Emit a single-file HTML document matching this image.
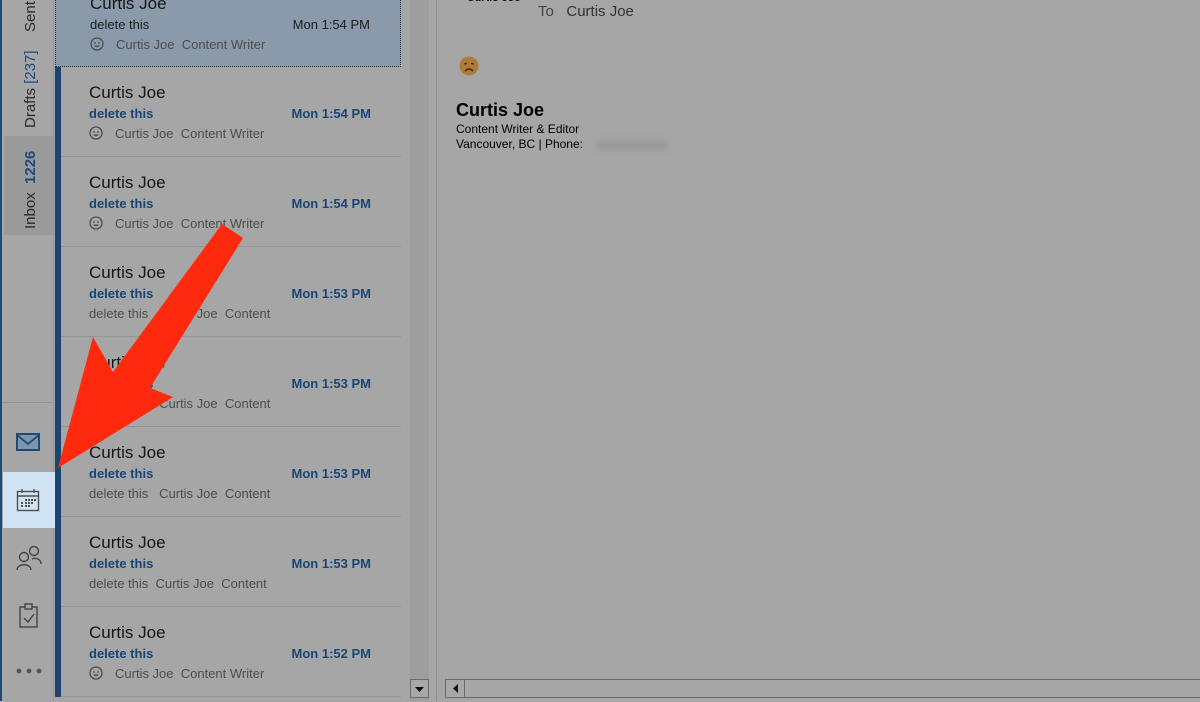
<!DOCTYPE html>
<html><head><meta charset="utf-8">
<style>
*{margin:0;padding:0;box-sizing:border-box}
body{width:1200px;height:701px;overflow:hidden;background:#a6a6a6;font-family:"Segoe UI","Liberation Sans","DejaVu Sans",sans-serif;position:relative}
.side{position:absolute;left:0;top:0;width:54px;height:701px;border-left:2px solid #1f4a78;border-right:1px solid #979797;background:#a6a6a6}
.vt{position:absolute;transform:rotate(-90deg);transform-origin:left top;white-space:nowrap;font-size:15px;color:#2a2a2a}
.vt b{color:#1c4a7a;font-weight:600}
.inboxbg{position:absolute;left:2px;top:136px;width:51px;height:99px;background:#9a9a9a}
.calbg{position:absolute;left:1px;top:472px;width:52px;height:56px;background:#cfe3f3}
.ico{position:absolute}
.list{position:absolute;left:55px;top:0;width:347px;height:701px}
.item{position:absolute;left:0;width:346px;height:90px;border-bottom:1px solid #959595}
.item .bar{position:absolute;left:0;top:0;width:6px;height:90px;background:#1c4471}
.nm{position:absolute;left:34px;top:16px;font-size:17px;color:#151515}
.sb{position:absolute;left:34px;top:39px;font-size:13px;font-weight:bold;color:#1a4675}
.tm{position:absolute;right:30px;top:39px;font-size:13px;font-weight:bold;color:#1a4675}
.pv{position:absolute;left:34px;top:59px;font-size:13px;color:#4d4d4d;white-space:pre}
.emo{display:inline-block;vertical-align:-2px;margin-right:12px}
.sel{background:#8a9aab;border:1px dotted #333}
.sel .sb,.sel .tm{font-weight:normal;color:#1c1c1c}
.vscroll{position:absolute;left:410px;top:0;width:19px;height:701px;background:#9e9e9e}
.btn{position:absolute;border:1px solid #6a6a6a;background:#a8a8a8}
.sep{position:absolute;left:436px;top:0;width:1px;height:701px;background:#8e8e8e}
.rp{position:absolute;left:437px;top:0;right:0;height:701px}
</style></head><body>
<svg width="0" height="0" style="position:absolute"><defs><g id="sm"><circle cx="7" cy="7" r="6" fill="none" stroke="#4d4d4d" stroke-width="1.3"/><path d="M4 6 L6 6 M8 6 L10 6" stroke="#4d4d4d" stroke-width="1.2"/><path d="M4 8.5 Q7 12 10 8.5 Z" fill="#4d4d4d"/></g></defs></svg>
<div class="side">
 <div class="inboxbg"></div>
 <div class="vt" style="left:20px;top:229px">Inbox&nbsp;&nbsp;<b>1226</b></div>
 <div class="vt" style="left:20px;top:128px">Drafts <span style="color:#1c4a7a">[237]</span></div>
 <div class="vt" style="left:20px;top:32px">Sent</div>
 <div style="position:absolute;left:0;top:402px;width:52px;height:1px;background:#959595"></div>
 <div class="calbg"></div>
 <svg class="ico" style="left:14px;top:433px" width="26" height="20"><rect x="1" y="1" width="22" height="16" fill="#7d95ad" stroke="#1f4a78" stroke-width="2"/><path d="M1 2 L12 11 L23 2" fill="none" stroke="#1f4a78" stroke-width="1.8"/></svg>
 <svg class="ico" style="left:14px;top:488px" width="26" height="26"><rect x="1.5" y="3.5" width="21" height="19" fill="none" stroke="#505050" stroke-width="1.4"/><line x1="1.5" y1="8" x2="22.5" y2="8" stroke="#505050" stroke-width="1.4"/><line x1="6" y1="1" x2="6" y2="5" stroke="#505050" stroke-width="1.4"/><line x1="18" y1="1" x2="18" y2="5" stroke="#505050" stroke-width="1.4"/><g fill="#505050"><rect x="9" y="11" width="2" height="2"/><rect x="12" y="11" width="2" height="2"/><rect x="15" y="11" width="2" height="2"/><rect x="18" y="11" width="2" height="2"/><rect x="5" y="14" width="2" height="2"/><rect x="9" y="14" width="2" height="2"/><rect x="12" y="14" width="2" height="2"/><rect x="15" y="14" width="2" height="2"/><rect x="5" y="17" width="2" height="2"/><rect x="9" y="17" width="2" height="2"/><rect x="12" y="17" width="2" height="2"/></g></svg>
 <svg class="ico" style="left:13px;top:545px" width="28" height="26" fill="none" stroke="#444" stroke-width="1.4"><circle cx="9" cy="12" r="4.5"/><path d="M2 25 C2 18 16 18 16 25"/><circle cx="19" cy="6" r="4.5"/><path d="M17 14 C22 12 26 15 26 19"/></svg>
 <svg class="ico" style="left:17px;top:603px" width="20" height="26" fill="none" stroke="#444" stroke-width="1.4"><rect x="1" y="4" width="17" height="20"/><rect x="6" y="1" width="7" height="5" fill="#a6a6a6"/><path d="M5 15 L9 19 L15 11"/></svg>
 <svg class="ico" style="left:13px;top:666px" width="30" height="10" fill="#555"><circle cx="4" cy="5" r="2.4"/><circle cx="14" cy="5" r="2.4"/><circle cx="24" cy="5" r="2.4"/></svg>
</div>

<div class="list">
 <div class="item sel" style="top:-23px;height:90px">
  <div class="nm">Curtis Joe</div><div class="sb">delete this</div><div class="tm">Mon 1:54 PM</div>
  <div class="pv"><svg class="emo" width="14" height="14"><use href="#sm"/></svg>Curtis Joe  Content Writer</div>
 </div>
 <div class="item" style="top:67px"><div class="bar"></div><div class="nm">Curtis Joe</div><div class="sb">delete this</div><div class="tm">Mon 1:54 PM</div><div class="pv"><svg class="emo" width="14" height="14"><use href="#sm"/></svg>Curtis Joe  Content Writer</div></div>
 <div class="item" style="top:157px"><div class="bar"></div><div class="nm">Curtis Joe</div><div class="sb">delete this</div><div class="tm">Mon 1:54 PM</div><div class="pv"><svg class="emo" width="14" height="14"><use href="#sm"/></svg>Curtis Joe  Content Writer</div></div>
 <div class="item" style="top:247px"><div class="bar"></div><div class="nm">Curtis Joe</div><div class="sb">delete this</div><div class="tm">Mon 1:53 PM</div><div class="pv">delete this   Curtis Joe  Content</div></div>
 <div class="item" style="top:337px"><div class="bar"></div><div class="nm">Curtis Joe</div><div class="sb">delete this</div><div class="tm">Mon 1:53 PM</div><div class="pv">delete this   Curtis Joe  Content</div></div>
 <div class="item" style="top:427px"><div class="bar"></div><div class="nm">Curtis Joe</div><div class="sb">delete this</div><div class="tm">Mon 1:53 PM</div><div class="pv">delete this   Curtis Joe  Content</div></div>
 <div class="item" style="top:517px"><div class="bar"></div><div class="nm">Curtis Joe</div><div class="sb">delete this</div><div class="tm">Mon 1:53 PM</div><div class="pv">delete this  Curtis Joe  Content</div></div>
 <div class="item" style="top:607px"><div class="bar"></div><div class="nm">Curtis Joe</div><div class="sb">delete this</div><div class="tm">Mon 1:52 PM</div><div class="pv"><svg class="emo" width="14" height="14"><use href="#sm"/></svg>Curtis Joe  Content Writer</div></div>
</div>

<div class="vscroll"></div>
<div class="btn" style="left:410px;top:679px;width:19px;height:19px"><svg width="17" height="17"><path d="M4 7 L13 7 L8.5 12 Z" fill="#111"/></svg></div>
<div class="sep"></div>
<div class="rp">
 <div style="position:absolute;left:30px;top:-8px;font-size:11px;font-style:italic;font-weight:bold;color:#111">Curtis Joe</div>
 <div style="position:absolute;left:101px;top:3px;font-size:15px;color:#444">To&nbsp;&nbsp;&nbsp;<span style="color:#333">Curtis Joe</span></div>
 <svg style="position:absolute;left:22px;top:56px" width="20" height="20"><circle cx="10" cy="10" r="9.5" fill="#b07a3a"/><path d="M5 8 L8 7.5 M12 7.5 L15 8" stroke="#3a2a1a" stroke-width="1.3"/><path d="M6 15 Q10 11 14 15" stroke="#3a2a1a" stroke-width="1.3" fill="none"/></svg>
 <div style="position:absolute;left:19px;top:100px;font-family:'Liberation Sans',Arial,sans-serif;font-size:18px;font-weight:bold;color:#000">Curtis Joe</div>
 <div style="position:absolute;left:19px;top:122px;font-family:'Liberation Sans',Arial,sans-serif;font-size:12px;color:#000">Content Writer &amp; Editor</div>
 <div style="position:absolute;left:19px;top:137px;font-family:'Liberation Sans',Arial,sans-serif;font-size:12px;color:#000">Vancouver, BC | Phone:</div>
 <div style="position:absolute;left:160px;top:140px;width:70px;height:10px;background:#999;filter:blur(3px)"></div>
 <div class="btn" style="left:8px;top:679px;width:20px;height:19px"><svg width="18" height="17"><path d="M12 4 L12 13 L7 8.5 Z" fill="#111"/></svg></div>
 <div class="btn" style="left:27px;top:679px;right:-2px;height:19px;background:#a6a6a6"></div>
</div>

<svg style="position:absolute;left:0;top:0" width="1200" height="701"><polygon points="222,224 243,238 150,388 173,397 58,468 93,337 113,372" fill="#ff2a0d"/></svg>
</body></html>
